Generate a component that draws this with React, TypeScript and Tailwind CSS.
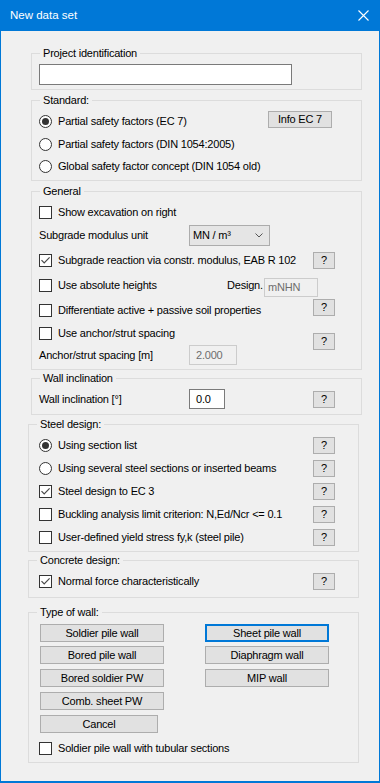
import React from "react";

const FONT = "font-['Liberation_Sans',Arial,sans-serif] text-[11px] tracking-[-0.2px] text-black";

function CheckBox({ checked = false }: { checked?: boolean }) {
  return (
    <span className="w-[13px] h-[13px] shrink-0 border border-[#333333] bg-white flex items-center justify-center">
      {checked && (
        <svg width="11" height="11" viewBox="0 0 11 11">
          <path d="M1.5 5.2 L4.2 8 L9.6 2.4" stroke="#4a4a4a" strokeWidth="1.2" fill="none" />
        </svg>
      )}
    </span>
  );
}

function Radio({ checked = false }: { checked?: boolean }) {
  return (
    <span className="w-[13px] h-[13px] shrink-0 rounded-full border border-[#333333] bg-white flex items-center justify-center">
      {checked && <span className="w-[7px] h-[7px] rounded-full bg-[#333333]" />}
    </span>
  );
}

function Help({ className = "" }: { className?: string }) {
  return (
    <button className={`ml-auto w-[22px] h-[17px] shrink-0 bg-[#e1e1e1] border border-[#adadad] flex items-center justify-center leading-none ${className}`}>
      ?
    </button>
  );
}

function Group({ label, className, children }: { label: string; className: string; children: React.ReactNode }) {
  return (
    <div className={`relative w-[331px] border border-[#dcdcdc] ${className}`}>
      <span className="absolute left-[8px] top-[-7px] px-[3px] bg-[#f0f0f0] leading-[13px]">{label}</span>
      {children}
    </div>
  );
}

function WallButton({ label, focused = false, wide = true }: { label: string; focused?: boolean; wide?: boolean }) {
  return (
    <button
      className={`${wide ? "w-[124px]" : "w-[118px]"} h-[18px] bg-[#e1e1e1] flex items-center justify-center leading-none ${
        focused ? "border-2 border-[#0078d7]" : "border border-[#adadad]"
      }`}
    >
      {label}
    </button>
  );
}

export default function App() {
  return (
    <div className={`w-[380px] h-[783px] bg-[#f0f0f0] border-x border-b-2 border-[#0078d7] flex flex-col ${FONT}`}>
      {/* title bar */}
      <div className="h-[31px] shrink-0 bg-[#0078d7] flex items-center pl-[9px] pr-[10px] text-white">
        <span className="text-[11.5px] tracking-normal">New data set</span>
        <svg className="ml-auto" width="11" height="11" viewBox="0 0 11 11">
          <path d="M0.5 0.5 L10.5 10.5 M10.5 0.5 L0.5 10.5" stroke="white" strokeWidth="1.1" />
        </svg>
      </div>

      <Group label="Project identification" className="ml-[30px] mt-[22px] pt-[10px] pb-[4px] pl-[7px]">
        <div className="w-[253px] h-[21px] bg-white border border-[#7a7a7a]" />
      </Group>

      <Group label="Standard:" className="ml-[30px] mt-[10px] pt-[9px] pb-[2px] pl-[7px] pr-[26px]">
        <div className="h-[23px] flex items-center gap-[6px]">
          <Radio checked />
          <span>Partial safety factors (EC 7)</span>
          <button className="ml-auto mr-[3px] self-start mt-[1px] w-[64px] h-[17px] bg-[#e1e1e1] border border-[#adadad] flex items-center justify-center leading-none">
            Info EC 7
          </button>
        </div>
        <div className="h-[22px] flex items-center gap-[6px]">
          <Radio />
          <span>Partial safety factors (DIN 1054:2005)</span>
        </div>
        <div className="h-[23px] flex items-center gap-[6px]">
          <Radio />
          <span>Global safety factor concept (DIN 1054 old)</span>
        </div>
      </Group>

      <Group label="General" className="ml-[30px] mt-[10px] pt-[9px] pb-[3px] pl-[7px] pr-[26px]">
        <div className="h-[23px] flex items-center gap-[6px]">
          <CheckBox />
          <span>Show excavation on right</span>
        </div>
        <div className="h-[23px] flex items-center">
          <span className="w-[150px]">Subgrade modulus unit</span>
          <div className="w-[81px] h-[21px] bg-[#e5e5e5] border border-[#acacac] flex items-center pl-[3px] pr-[6px]">
            <span>MN / m³</span>
            <svg className="ml-auto" width="8" height="5" viewBox="0 0 8 5">
              <path d="M0.5 0.5 L4 4 L7.5 0.5" stroke="#555" strokeWidth="1" fill="none" />
            </svg>
          </div>
        </div>
        <div className="h-[26px] flex items-center gap-[6px]">
          <CheckBox checked />
          <span>Subgrade reaction via constr. modulus, EAB R 102</span>
          <Help />
        </div>
        <div className="h-[24px] flex items-center">
          <CheckBox />
          <span className="ml-[6px] w-[169px]">Use absolute heights</span>
          <span className="w-[37px]">Design.</span>
          <div className="self-start mt-[5px] w-[54px] h-[19px] border border-[#cccccc] bg-[#f0f0f0] flex items-center pl-[3px] text-[#6d6d6d]">
            mNHN
          </div>
        </div>
        <div className="h-[26px] flex items-center gap-[6px]">
          <CheckBox />
          <span>Differentiate active + passive soil properties</span>
          <Help className="self-start mt-[2px]" />
        </div>
        <div className="flex">
          <div className="flex flex-col">
            <div className="h-[21px] flex items-center gap-[6px]">
              <CheckBox />
              <span>Use anchor/strut spacing</span>
            </div>
            <div className="h-[22px] flex items-center">
              <span className="w-[150px]">Anchor/strut spacing [m]</span>
              <div className="w-[48px] h-[20px] border border-[#cccccc] bg-[#f0f0f0] flex items-center pl-[6px] text-[#6d6d6d]">
                2.000
              </div>
            </div>
          </div>
          <Help className="mt-[10px]" />
        </div>
      </Group>

      <Group label="Wall inclination" className="ml-[30px] mt-[8px] pt-[10px] pb-[5px] pl-[7px] pr-[26px]">
        <div className="h-[20px] flex items-center">
          <span className="w-[150px]">Wall inclination [°]</span>
          <div className="w-[36px] h-[20px] bg-white border border-[#7a7a7a] flex items-center pl-[6px]">0.0</div>
          <Help />
        </div>
      </Group>

      <Group label="Steel design:" className="ml-[27px] mt-[9px] pt-[9px] pb-[2px] pl-[10px] pr-[23px]">
        <div className="h-[23px] flex items-center gap-[6px]">
          <Radio checked />
          <span>Using section list</span>
          <Help />
        </div>
        <div className="h-[23px] flex items-center gap-[6px]">
          <Radio />
          <span>Using several steel sections or inserted beams</span>
          <Help />
        </div>
        <div className="h-[23px] flex items-center gap-[6px]">
          <CheckBox checked />
          <span>Steel design to EC 3</span>
          <Help />
        </div>
        <div className="h-[23px] flex items-center gap-[6px]">
          <CheckBox />
          <span>Buckling analysis limit criterion: N,Ed/Ncr &lt;= 0.1</span>
          <Help />
        </div>
        <div className="h-[23px] flex items-center gap-[6px]">
          <CheckBox />
          <span>User-defined yield stress fy,k (steel pile)</span>
          <Help />
        </div>
      </Group>

      <Group label="Concrete design:" className="ml-[27px] mt-[8px] pt-[9px] pb-[4px] pl-[10px] pr-[23px]">
        <div className="h-[23px] flex items-center gap-[6px]">
          <CheckBox checked />
          <span>Normal force characteristically</span>
          <Help />
        </div>
      </Group>

      <Group label="Type of wall:" className="ml-[27px] mt-[14px] pt-[11px] pb-[2px] pl-[11px]">
        <div className="flex gap-[41px]">
          <WallButton label="Soldier pile wall" />
          <WallButton label="Sheet pile wall" focused />
        </div>
        <div className="flex gap-[41px] mt-[4px]">
          <WallButton label="Bored pile wall" />
          <WallButton label="Diaphragm wall" />
        </div>
        <div className="flex gap-[41px] mt-[5px]">
          <WallButton label="Bored soldier PW" />
          <WallButton label="MIP wall" />
        </div>
        <div className="flex mt-[5px]">
          <WallButton label="Comb. sheet PW" />
        </div>
        <div className="flex mt-[5px]">
          <WallButton label="Cancel" wide={false} />
        </div>
        <div className="mt-[4px] -ml-[1px] h-[23px] flex items-center gap-[6px]">
          <CheckBox />
          <span>Soldier pile wall with tubular sections</span>
        </div>
      </Group>
    </div>
  );
}
